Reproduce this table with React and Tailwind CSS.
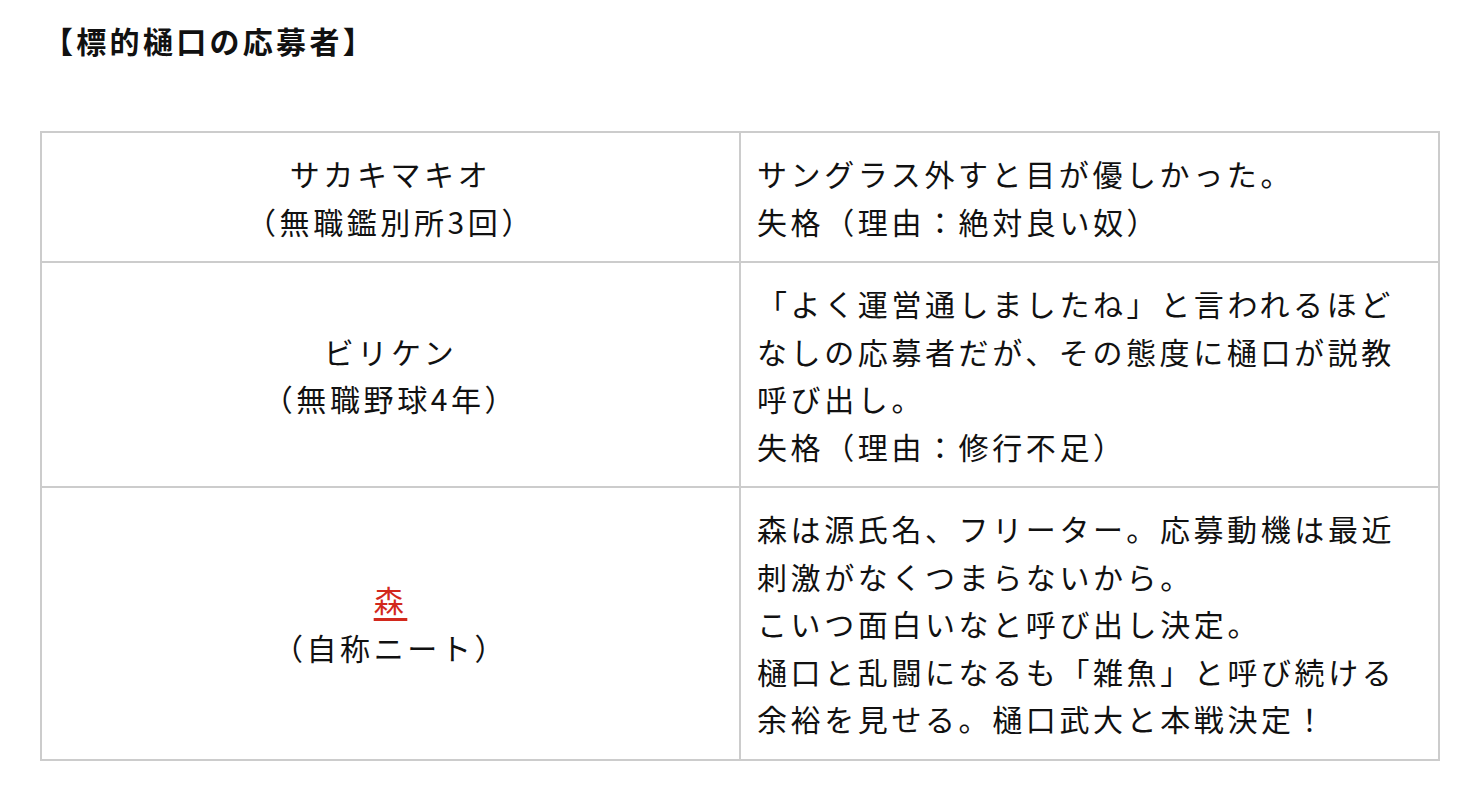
import React from 'react';

const rows = [
  {
    name: 'サカキマキオ',
    note: '（無職鑑別所3回）',
    body: ['サングラス外すと目が優しかった。', '失格（理由：絶対良い奴）'],
  },
  {
    name: 'ビリケン',
    note: '（無職野球4年）',
    body: ['「よく運営通しましたね」と言われるほどなしの応募者だが、その態度に樋口が説教呼び出し。', '失格（理由：修行不足）'],
  },
  {
    name: '森',
    link: true,
    note: '（自称ニート）',
    body: [
      '森は源氏名、フリーター。応募動機は最近刺激がなくつまらないから。',
      'こいつ面白いなと呼び出し決定。',
      '樋口と乱闘になるも「雑魚」と呼び続ける余裕を見せる。樋口武大と本戦決定！',
    ],
  },
];

const App = () => {
  return (
    <div
      className="min-h-screen bg-white text-[#111]"
      style={{ fontFamily: '"Noto Sans CJK JP", "Noto Sans", sans-serif' }}
    >
      <div className="w-[1400px] ml-[40px] pt-[18px]">
        <h2 className="text-[30px] leading-[44px] font-bold tracking-[0.11em] ml-[3px]">【標的樋口の応募者】</h2>
        <table className="mt-[69px] w-full border-collapse table-fixed">
          <tbody>
            {rows.map((r, i) => (
              <tr key={i}>
                <td className="w-1/2 border-2 border-[#cccccc] px-[16px] pt-[17px] pb-[16px] text-center align-middle text-[30px] leading-[47.5px] tracking-[0.12em]">
                  {r.link ? (
                    <a href="#" className="text-[#d2281c] underline underline-offset-[6px]">{r.name}</a>
                  ) : (
                    r.name
                  )}
                  <br />
                  {r.note}
                </td>
                <td className="w-1/2 border-2 border-[#cccccc] px-[16px] pt-[17px] pb-[16px] align-middle text-[30px] leading-[47.5px] tracking-[0.12em]">
                  {r.body.map((t, j) => (
                    <div key={j}>{t}</div>
                  ))}
                </td>
              </tr>
            ))}
          </tbody>
        </table>
      </div>
    </div>
  );
};

export default App;
